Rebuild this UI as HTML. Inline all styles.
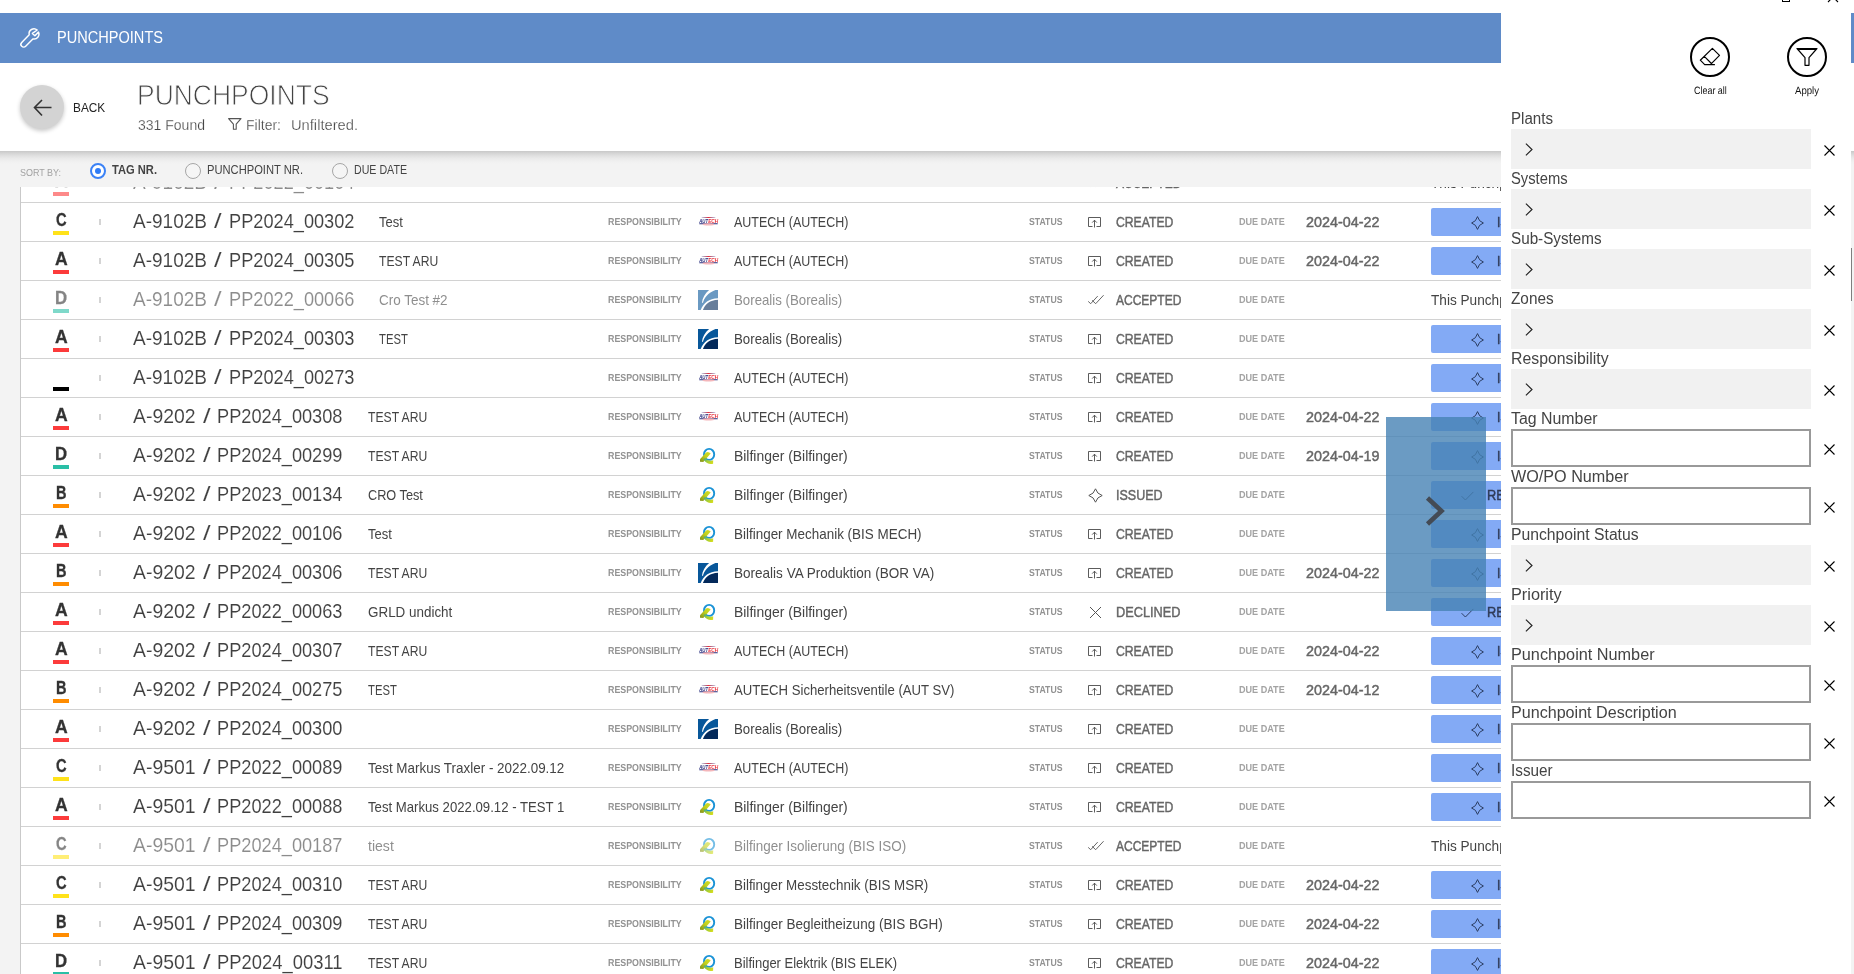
<!DOCTYPE html>
<html><head><meta charset="utf-8"><title>Punchpoints</title>
<style>
*{box-sizing:border-box;margin:0;padding:0}
html,body{width:1854px;height:974px;overflow:hidden;background:#fff}
body{font-family:"Liberation Sans",sans-serif;position:relative}
.t{position:absolute;white-space:nowrap;line-height:1;transform-origin:0 0;display:block}
.abs{position:absolute}
#hdr{left:0;top:13px;width:1854px;height:50px;background:#5f8bc8}
#sub{left:0;top:63px;width:1854px;height:88px;background:#fff}
#sortbg{left:0;top:151px;width:1854px;height:823px;background:#f3f3f3}
#shadow{left:0;top:151px;width:1854px;height:13px;background:linear-gradient(#c8c8c8 0,#d5d5d5 18%,#e1e1e1 38%,#eaeaea 58%,#f0f0f0 80%,#f3f3f3 100%)}
#list{left:20px;top:187px;width:1500px;height:787px;background:#fff;border-left:1px solid #c9c9c9;overflow:hidden}
.row{position:absolute;left:0;width:1500px;height:39px;border-bottom:1px solid #d2d2d2}
.bar{position:absolute;left:32px;top:28px;width:16px;height:4px}
.tick{position:absolute;left:78px;top:16px;width:2px;height:6px;background:#d4d4d4}
.btn{position:absolute;left:1410px;top:5px;width:100px;height:28px;background:#83aaf5;border-radius:2px}
#ov{left:1386px;top:417px;width:100px;height:194px;background:rgba(70,130,180,.8)}
#panel{left:1501px;top:0;width:350px;height:974px;background:#fff}
.fld{position:absolute;left:10px;width:300px;height:40px;background:#f1f1f1}
.inp{position:absolute;left:10px;width:300px;height:38px;background:#fff;border:2px solid #999}
svg{position:absolute;overflow:visible}
#root{position:absolute;left:0;top:0;width:1854px;height:974px;overflow:hidden;will-change:transform}
.f{opacity:.6}
</style></head>
<body><div id="root">
<div id="hdr" class="abs"></div>
<div id="sub" class="abs"></div>
<div id="sortbg" class="abs"></div>
<div id="shadow" class="abs"></div>
<svg style="left:20px;top:28px" width="20" height="20" viewBox="0 0 20 20"><g transform="translate(0.9,0.9) scale(0.92)"><path d="M17.7 1.2A5.3 5.3 0 0 0 9.05 6.4L0.9 14.7A2.9 2.9 0 0 0 5.2 18.9L13 10.9A5.3 5.3 0 0 0 19.1 3.5L15.2 7.5L12.5 4.9Z" fill="none" stroke="#fff" stroke-width="1.6" stroke-linejoin="round"/></g></svg>
<span class="t" style="left:57.20px;top:29.35px;font-size:16.1px;color:#fff;transform:scaleX(0.9049);">PUNCHPOINTS</span>
<div class="abs" style="left:20px;top:85px;width:44px;height:44px;border-radius:50%;background:#d3d3d3;box-shadow:0 2px 4px rgba(0,0,0,.22)"></div>
<svg style="left:20px;top:85px" width="44" height="44" viewBox="0 0 44 44"><path d="M31.5 22.5H14.5M22 15L14.5 22.5L22 30.5" fill="none" stroke="#333" stroke-width="1.6"/></svg>
<span class="t" style="left:73.20px;top:101.00px;font-size:13.2px;color:#222;transform:scaleX(0.8964);">BACK</span>
<span class="t" style="left:137.30px;top:80.70px;font-size:29px;color:#444;transform:scaleX(0.9125);-webkit-text-stroke:0.9px #fff;">PUNCHPOINTS</span>
<span class="t" style="left:138.00px;top:116.65px;font-size:15.3px;color:#444;transform:scaleX(0.9158);-webkit-text-stroke:0.25px #fff;">331 Found</span>
<svg style="left:228px;top:118px" width="14" height="13" viewBox="0 0 14 13"><path d="M0.6 0.6H13L8.2 6.2V11.2H5.4V6.2Z" fill="none" stroke="#555" stroke-width="1.1" stroke-linejoin="round"/></svg>
<span class="t" style="left:246.00px;top:116.65px;font-size:15.3px;color:#444;transform:scaleX(0.9150);-webkit-text-stroke:0.25px #fff;">Filter:</span>
<span class="t" style="left:291.00px;top:116.65px;font-size:15.3px;color:#444;transform:scaleX(0.9609);-webkit-text-stroke:0.25px #fff;">Unfiltered.</span>
<span class="t" style="left:20.20px;top:168.30px;font-size:10.2px;color:#a2a2a2;transform:scaleX(0.8793) rotate(0.03deg);">SORT BY:</span>
<div class="abs" style="left:90px;top:163px;width:16px;height:16px;border-radius:50%;border:2px solid #3b82f6;background:#fff"></div>
<div class="abs" style="left:95px;top:168px;width:6px;height:6px;border-radius:50%;background:#2f7cf6"></div>
<span class="t" style="left:112.00px;top:164.10px;font-size:12.2px;color:#444;transform:scaleX(0.9145);font-weight:bold;">TAG NR.</span>
<div class="abs" style="left:185px;top:163px;width:16px;height:16px;border-radius:50%;border:1.7px solid #a6a6a6;background:#f5f5f5"></div>
<span class="t" style="left:207.00px;top:164.10px;font-size:12.2px;color:#444;transform:scaleX(0.9166);">PUNCHPOINT NR.</span>
<div class="abs" style="left:332px;top:163px;width:16px;height:16px;border-radius:50%;border:1.7px solid #a6a6a6;background:#f5f5f5"></div>
<span class="t" style="left:354.00px;top:164.10px;font-size:12.2px;color:#444;transform:scaleX(0.8729);">DUE DATE</span>
<div id="list" class="abs">
<div class="row" style="top:-23px">
<span class="t f" style="left:33.65px;top:8.40px;font-size:18.2px;color:#333;transform:scaleX(0.9667);font-weight:bold;-webkit-text-stroke:0.3px #333;">A</span>
<div class="bar f" style="background:#fc3b3b"></div>
<div class="tick"></div>
<span class="t f" style="left:112.20px;top:7.65px;font-size:20.3px;color:#404040;transform:scaleX(0.9374);-webkit-text-stroke:0.1px #fff;">A-9102B</span>
<span class="t f" style="left:193.20px;top:7.65px;font-size:20.3px;color:#404040;transform:scaleX(1.3465);-webkit-text-stroke:0.1px #fff;">/</span>
<span class="t f" style="left:207.70px;top:7.65px;font-size:20.3px;color:#404040;transform:scaleX(0.8973);-webkit-text-stroke:0.1px #fff;">PP2022_00104</span>
<span class="t" style="left:586.80px;top:14.40px;font-size:10.2px;color:#939393;transform:scaleX(0.8689) rotate(0.03deg);font-weight:bold;">RESPONSIBILITY</span>
<svg class="f" style="left:677px;top:13px" width="21" height="10" viewBox="0 0 21 10"><defs><linearGradient id="ga" x1="0" x2="1"><stop offset="0" stop-color="#2a2f7e" stop-opacity=".2"/><stop offset=".5" stop-color="#e8303a"/><stop offset="1" stop-color="#2a2f7e" stop-opacity=".2"/></linearGradient></defs><rect x="3.5" y="1" width="14" height="1" rx=".5" fill="url(#ga)"/><text x="1.2" y="6.6" font-family="Liberation Sans, sans-serif" font-weight="bold" font-style="italic" font-size="5.6" fill="#2a2f7e" textLength="9" lengthAdjust="spacingAndGlyphs">AUT</text><text x="10.2" y="6.6" font-family="Liberation Sans, sans-serif" font-weight="bold" font-style="italic" font-size="5.6" fill="#e8303a" textLength="10" lengthAdjust="spacingAndGlyphs">ECH</text><rect x="1.2" y="7.2" width="18.6" height="1" rx=".5" fill="#2a2f7e"/><ellipse cx="10.5" cy="8.4" rx="6" ry="1.1" fill="#f4b6ba"/></svg>
<span class="t" style="left:1007.80px;top:14.40px;font-size:10.2px;color:#939393;transform:scaleX(0.8533) rotate(0.03deg);font-weight:bold;">STATUS</span>
<svg style="left:1066px;top:13px" width="17" height="11" viewBox="0 0 17 11"><path d="M1.2 7.4L3.7 9.7L10.7 2.1M5.1 6.3L8.7 9.7L16.6 1.2" fill="none" stroke="#555" stroke-width="0.9"/></svg>
<span class="t" style="left:1094.50px;top:11.80px;font-size:14.4px;color:#666;transform:scaleX(0.8345);-webkit-text-stroke:0.45px #666;">ACCEPTED</span>
<span class="t" style="left:1218.30px;top:14.40px;font-size:10.2px;color:#a3a3a3;transform:scaleX(0.8903) rotate(0.03deg);font-weight:bold;">DUE DATE</span>
<span class="t" style="left:1410.00px;top:12.30px;font-size:14.2px;color:#444;transform:scaleX(0.9600);">This Punchpoint</span>
</div>
<div class="row" style="top:16px">
<span class="t" style="left:34.70px;top:8.40px;font-size:18.2px;color:#333;transform:scaleX(0.8069);font-weight:bold;-webkit-text-stroke:0.3px #333;">C</span>
<div class="bar " style="background:#ffe21a"></div>
<div class="tick"></div>
<span class="t" style="left:112.20px;top:7.65px;font-size:20.3px;color:#404040;transform:scaleX(0.9374);-webkit-text-stroke:0.1px #fff;">A-9102B</span>
<span class="t" style="left:193.20px;top:7.65px;font-size:20.3px;color:#404040;transform:scaleX(1.3465);-webkit-text-stroke:0.1px #fff;">/</span>
<span class="t" style="left:207.70px;top:7.65px;font-size:20.3px;color:#404040;transform:scaleX(0.8973);-webkit-text-stroke:0.1px #fff;">PP2024_00302</span>
<span class="t" style="left:358.00px;top:12.30px;font-size:14.2px;color:#444;transform:scaleX(0.9143);">Test</span>
<span class="t" style="left:586.80px;top:14.40px;font-size:10.2px;color:#939393;transform:scaleX(0.8689) rotate(0.03deg);font-weight:bold;">RESPONSIBILITY</span>
<svg style="left:677px;top:13px" width="21" height="10" viewBox="0 0 21 10"><defs><linearGradient id="ga" x1="0" x2="1"><stop offset="0" stop-color="#2a2f7e" stop-opacity=".2"/><stop offset=".5" stop-color="#e8303a"/><stop offset="1" stop-color="#2a2f7e" stop-opacity=".2"/></linearGradient></defs><rect x="3.5" y="1" width="14" height="1" rx=".5" fill="url(#ga)"/><text x="1.2" y="6.6" font-family="Liberation Sans, sans-serif" font-weight="bold" font-style="italic" font-size="5.6" fill="#2a2f7e" textLength="9" lengthAdjust="spacingAndGlyphs">AUT</text><text x="10.2" y="6.6" font-family="Liberation Sans, sans-serif" font-weight="bold" font-style="italic" font-size="5.6" fill="#e8303a" textLength="10" lengthAdjust="spacingAndGlyphs">ECH</text><rect x="1.2" y="7.2" width="18.6" height="1" rx=".5" fill="#2a2f7e"/><ellipse cx="10.5" cy="8.4" rx="6" ry="1.1" fill="#f4b6ba"/></svg>
<span class="t" style="left:713.30px;top:11.85px;font-size:14.3px;color:#444;transform:scaleX(0.8721);">AUTECH (AUTECH)</span>
<span class="t" style="left:1007.80px;top:14.40px;font-size:10.2px;color:#939393;transform:scaleX(0.8533) rotate(0.03deg);font-weight:bold;">STATUS</span>
<svg style="left:1067px;top:13px" width="13" height="12" viewBox="0 0 13 12"><path d="M4.5 10.5H0.5V1.5H12.5V10.5H8.5M6.5 11.5V4.2M4.2 6.6L6.5 4.2L8.8 6.6" fill="none" stroke="#4a4a4a" stroke-width="0.9"/></svg>
<span class="t" style="left:1094.50px;top:11.80px;font-size:14.4px;color:#666;transform:scaleX(0.8478);-webkit-text-stroke:0.45px #666;">CREATED</span>
<span class="t" style="left:1218.30px;top:14.40px;font-size:10.2px;color:#a3a3a3;transform:scaleX(0.8903) rotate(0.03deg);font-weight:bold;">DUE DATE</span>
<span class="t" style="left:1285.00px;top:11.80px;font-size:14.4px;color:#666;transform:scaleX(0.9970);-webkit-text-stroke:0.45px #666;">2024-04-22</span>
<div class="btn"></div>
<svg style="left:1450px;top:13px" width="13" height="14" viewBox="0 0 13 14"><path d="M6.5 0.6Q7.8 5.6 12.4 7Q7.8 8.4 6.5 13.4Q5.2 8.4 0.6 7Q5.2 5.6 6.5 0.6Z" fill="none" stroke="#2c3e63" stroke-width="1" stroke-linejoin="round"/></svg>
<span class="t" style="left:1475.60px;top:12.00px;font-size:14.4px;color:#2f3b58;transform:scaleX(0.8336);-webkit-text-stroke:0.45px #2f3b58;">ISSUE</span>
</div>
<div class="row" style="top:55px">
<span class="t" style="left:33.65px;top:8.40px;font-size:18.2px;color:#333;transform:scaleX(0.9667);font-weight:bold;-webkit-text-stroke:0.3px #333;">A</span>
<div class="bar " style="background:#fc3b3b"></div>
<div class="tick"></div>
<span class="t" style="left:112.20px;top:7.65px;font-size:20.3px;color:#404040;transform:scaleX(0.9374);-webkit-text-stroke:0.1px #fff;">A-9102B</span>
<span class="t" style="left:193.20px;top:7.65px;font-size:20.3px;color:#404040;transform:scaleX(1.3465);-webkit-text-stroke:0.1px #fff;">/</span>
<span class="t" style="left:207.70px;top:7.65px;font-size:20.3px;color:#404040;transform:scaleX(0.8973);-webkit-text-stroke:0.1px #fff;">PP2024_00305</span>
<span class="t" style="left:358.00px;top:12.30px;font-size:14.2px;color:#444;transform:scaleX(0.8564);">TEST ARU</span>
<span class="t" style="left:586.80px;top:14.40px;font-size:10.2px;color:#939393;transform:scaleX(0.8689) rotate(0.03deg);font-weight:bold;">RESPONSIBILITY</span>
<svg style="left:677px;top:13px" width="21" height="10" viewBox="0 0 21 10"><defs><linearGradient id="ga" x1="0" x2="1"><stop offset="0" stop-color="#2a2f7e" stop-opacity=".2"/><stop offset=".5" stop-color="#e8303a"/><stop offset="1" stop-color="#2a2f7e" stop-opacity=".2"/></linearGradient></defs><rect x="3.5" y="1" width="14" height="1" rx=".5" fill="url(#ga)"/><text x="1.2" y="6.6" font-family="Liberation Sans, sans-serif" font-weight="bold" font-style="italic" font-size="5.6" fill="#2a2f7e" textLength="9" lengthAdjust="spacingAndGlyphs">AUT</text><text x="10.2" y="6.6" font-family="Liberation Sans, sans-serif" font-weight="bold" font-style="italic" font-size="5.6" fill="#e8303a" textLength="10" lengthAdjust="spacingAndGlyphs">ECH</text><rect x="1.2" y="7.2" width="18.6" height="1" rx=".5" fill="#2a2f7e"/><ellipse cx="10.5" cy="8.4" rx="6" ry="1.1" fill="#f4b6ba"/></svg>
<span class="t" style="left:713.30px;top:11.85px;font-size:14.3px;color:#444;transform:scaleX(0.8721);">AUTECH (AUTECH)</span>
<span class="t" style="left:1007.80px;top:14.40px;font-size:10.2px;color:#939393;transform:scaleX(0.8533) rotate(0.03deg);font-weight:bold;">STATUS</span>
<svg style="left:1067px;top:13px" width="13" height="12" viewBox="0 0 13 12"><path d="M4.5 10.5H0.5V1.5H12.5V10.5H8.5M6.5 11.5V4.2M4.2 6.6L6.5 4.2L8.8 6.6" fill="none" stroke="#4a4a4a" stroke-width="0.9"/></svg>
<span class="t" style="left:1094.50px;top:11.80px;font-size:14.4px;color:#666;transform:scaleX(0.8478);-webkit-text-stroke:0.45px #666;">CREATED</span>
<span class="t" style="left:1218.30px;top:14.40px;font-size:10.2px;color:#a3a3a3;transform:scaleX(0.8903) rotate(0.03deg);font-weight:bold;">DUE DATE</span>
<span class="t" style="left:1285.00px;top:11.80px;font-size:14.4px;color:#666;transform:scaleX(0.9970);-webkit-text-stroke:0.45px #666;">2024-04-22</span>
<div class="btn"></div>
<svg style="left:1450px;top:13px" width="13" height="14" viewBox="0 0 13 14"><path d="M6.5 0.6Q7.8 5.6 12.4 7Q7.8 8.4 6.5 13.4Q5.2 8.4 0.6 7Q5.2 5.6 6.5 0.6Z" fill="none" stroke="#2c3e63" stroke-width="1" stroke-linejoin="round"/></svg>
<span class="t" style="left:1475.60px;top:12.00px;font-size:14.4px;color:#2f3b58;transform:scaleX(0.8336);-webkit-text-stroke:0.45px #2f3b58;">ISSUE</span>
</div>
<div class="row" style="top:94px">
<span class="t f" style="left:33.95px;top:8.40px;font-size:18.2px;color:#333;transform:scaleX(0.9210);font-weight:bold;-webkit-text-stroke:0.3px #333;">D</span>
<div class="bar f" style="background:#2abfa6"></div>
<div class="tick"></div>
<span class="t f" style="left:112.20px;top:7.65px;font-size:20.3px;color:#404040;transform:scaleX(0.9374);-webkit-text-stroke:0.1px #fff;">A-9102B</span>
<span class="t f" style="left:193.20px;top:7.65px;font-size:20.3px;color:#404040;transform:scaleX(1.3465);-webkit-text-stroke:0.1px #fff;">/</span>
<span class="t f" style="left:207.70px;top:7.65px;font-size:20.3px;color:#404040;transform:scaleX(0.8973);-webkit-text-stroke:0.1px #fff;">PP2022_00066</span>
<span class="t f" style="left:358.00px;top:12.30px;font-size:14.2px;color:#444;transform:scaleX(0.9489);">Cro Test #2</span>
<span class="t" style="left:586.80px;top:14.40px;font-size:10.2px;color:#939393;transform:scaleX(0.8689) rotate(0.03deg);font-weight:bold;">RESPONSIBILITY</span>
<svg class="f" style="left:677px;top:9px" width="20" height="20" viewBox="0 0 20 20"><rect width="20" height="20" fill="#08579a"/><path d="M20 9.6C12 9.9 7 14 5 20H20Z" fill="#03295a"/><path d="M20 8.3C11 8.6 5.5 13 2.7 20H4.9C7 14 12 10 20 9.7Z" fill="#fff"/><path d="M11.1 0C7 3.5 4.3 8 4 12.5L4.9 13.1C6 8 10 3 17.4 0Z" fill="#fff"/></svg>
<span class="t f" style="left:713.30px;top:11.85px;font-size:14.3px;color:#444;transform:scaleX(0.9271);">Borealis (Borealis)</span>
<span class="t" style="left:1007.80px;top:14.40px;font-size:10.2px;color:#939393;transform:scaleX(0.8533) rotate(0.03deg);font-weight:bold;">STATUS</span>
<svg style="left:1066px;top:13px" width="17" height="11" viewBox="0 0 17 11"><path d="M1.2 7.4L3.7 9.7L10.7 2.1M5.1 6.3L8.7 9.7L16.6 1.2" fill="none" stroke="#555" stroke-width="0.9"/></svg>
<span class="t" style="left:1094.50px;top:11.80px;font-size:14.4px;color:#666;transform:scaleX(0.8345);-webkit-text-stroke:0.45px #666;">ACCEPTED</span>
<span class="t" style="left:1218.30px;top:14.40px;font-size:10.2px;color:#a3a3a3;transform:scaleX(0.8903) rotate(0.03deg);font-weight:bold;">DUE DATE</span>
<span class="t" style="left:1410.00px;top:12.30px;font-size:14.2px;color:#444;transform:scaleX(0.9600);">This Punchpoint</span>
</div>
<div class="row" style="top:133px">
<span class="t" style="left:33.65px;top:8.40px;font-size:18.2px;color:#333;transform:scaleX(0.9667);font-weight:bold;-webkit-text-stroke:0.3px #333;">A</span>
<div class="bar " style="background:#fc3b3b"></div>
<div class="tick"></div>
<span class="t" style="left:112.20px;top:7.65px;font-size:20.3px;color:#404040;transform:scaleX(0.9374);-webkit-text-stroke:0.1px #fff;">A-9102B</span>
<span class="t" style="left:193.20px;top:7.65px;font-size:20.3px;color:#404040;transform:scaleX(1.3465);-webkit-text-stroke:0.1px #fff;">/</span>
<span class="t" style="left:207.70px;top:7.65px;font-size:20.3px;color:#404040;transform:scaleX(0.8973);-webkit-text-stroke:0.1px #fff;">PP2024_00303</span>
<span class="t" style="left:358.00px;top:12.30px;font-size:14.2px;color:#444;transform:scaleX(0.7940);">TEST</span>
<span class="t" style="left:586.80px;top:14.40px;font-size:10.2px;color:#939393;transform:scaleX(0.8689) rotate(0.03deg);font-weight:bold;">RESPONSIBILITY</span>
<svg style="left:677px;top:9px" width="20" height="20" viewBox="0 0 20 20"><rect width="20" height="20" fill="#08579a"/><path d="M20 9.6C12 9.9 7 14 5 20H20Z" fill="#03295a"/><path d="M20 8.3C11 8.6 5.5 13 2.7 20H4.9C7 14 12 10 20 9.7Z" fill="#fff"/><path d="M11.1 0C7 3.5 4.3 8 4 12.5L4.9 13.1C6 8 10 3 17.4 0Z" fill="#fff"/></svg>
<span class="t" style="left:713.30px;top:11.85px;font-size:14.3px;color:#444;transform:scaleX(0.9271);">Borealis (Borealis)</span>
<span class="t" style="left:1007.80px;top:14.40px;font-size:10.2px;color:#939393;transform:scaleX(0.8533) rotate(0.03deg);font-weight:bold;">STATUS</span>
<svg style="left:1067px;top:13px" width="13" height="12" viewBox="0 0 13 12"><path d="M4.5 10.5H0.5V1.5H12.5V10.5H8.5M6.5 11.5V4.2M4.2 6.6L6.5 4.2L8.8 6.6" fill="none" stroke="#4a4a4a" stroke-width="0.9"/></svg>
<span class="t" style="left:1094.50px;top:11.80px;font-size:14.4px;color:#666;transform:scaleX(0.8478);-webkit-text-stroke:0.45px #666;">CREATED</span>
<span class="t" style="left:1218.30px;top:14.40px;font-size:10.2px;color:#a3a3a3;transform:scaleX(0.8903) rotate(0.03deg);font-weight:bold;">DUE DATE</span>
<div class="btn"></div>
<svg style="left:1450px;top:13px" width="13" height="14" viewBox="0 0 13 14"><path d="M6.5 0.6Q7.8 5.6 12.4 7Q7.8 8.4 6.5 13.4Q5.2 8.4 0.6 7Q5.2 5.6 6.5 0.6Z" fill="none" stroke="#2c3e63" stroke-width="1" stroke-linejoin="round"/></svg>
<span class="t" style="left:1475.60px;top:12.00px;font-size:14.4px;color:#2f3b58;transform:scaleX(0.8336);-webkit-text-stroke:0.45px #2f3b58;">ISSUE</span>
</div>
<div class="row" style="top:172px">
<div class="bar " style="background:#000"></div>
<div class="tick"></div>
<span class="t" style="left:112.20px;top:7.65px;font-size:20.3px;color:#404040;transform:scaleX(0.9374);-webkit-text-stroke:0.1px #fff;">A-9102B</span>
<span class="t" style="left:193.20px;top:7.65px;font-size:20.3px;color:#404040;transform:scaleX(1.3465);-webkit-text-stroke:0.1px #fff;">/</span>
<span class="t" style="left:207.70px;top:7.65px;font-size:20.3px;color:#404040;transform:scaleX(0.8973);-webkit-text-stroke:0.1px #fff;">PP2024_00273</span>
<span class="t" style="left:586.80px;top:14.40px;font-size:10.2px;color:#939393;transform:scaleX(0.8689) rotate(0.03deg);font-weight:bold;">RESPONSIBILITY</span>
<svg style="left:677px;top:13px" width="21" height="10" viewBox="0 0 21 10"><defs><linearGradient id="ga" x1="0" x2="1"><stop offset="0" stop-color="#2a2f7e" stop-opacity=".2"/><stop offset=".5" stop-color="#e8303a"/><stop offset="1" stop-color="#2a2f7e" stop-opacity=".2"/></linearGradient></defs><rect x="3.5" y="1" width="14" height="1" rx=".5" fill="url(#ga)"/><text x="1.2" y="6.6" font-family="Liberation Sans, sans-serif" font-weight="bold" font-style="italic" font-size="5.6" fill="#2a2f7e" textLength="9" lengthAdjust="spacingAndGlyphs">AUT</text><text x="10.2" y="6.6" font-family="Liberation Sans, sans-serif" font-weight="bold" font-style="italic" font-size="5.6" fill="#e8303a" textLength="10" lengthAdjust="spacingAndGlyphs">ECH</text><rect x="1.2" y="7.2" width="18.6" height="1" rx=".5" fill="#2a2f7e"/><ellipse cx="10.5" cy="8.4" rx="6" ry="1.1" fill="#f4b6ba"/></svg>
<span class="t" style="left:713.30px;top:11.85px;font-size:14.3px;color:#444;transform:scaleX(0.8721);">AUTECH (AUTECH)</span>
<span class="t" style="left:1007.80px;top:14.40px;font-size:10.2px;color:#939393;transform:scaleX(0.8533) rotate(0.03deg);font-weight:bold;">STATUS</span>
<svg style="left:1067px;top:13px" width="13" height="12" viewBox="0 0 13 12"><path d="M4.5 10.5H0.5V1.5H12.5V10.5H8.5M6.5 11.5V4.2M4.2 6.6L6.5 4.2L8.8 6.6" fill="none" stroke="#4a4a4a" stroke-width="0.9"/></svg>
<span class="t" style="left:1094.50px;top:11.80px;font-size:14.4px;color:#666;transform:scaleX(0.8478);-webkit-text-stroke:0.45px #666;">CREATED</span>
<span class="t" style="left:1218.30px;top:14.40px;font-size:10.2px;color:#a3a3a3;transform:scaleX(0.8903) rotate(0.03deg);font-weight:bold;">DUE DATE</span>
<div class="btn"></div>
<svg style="left:1450px;top:13px" width="13" height="14" viewBox="0 0 13 14"><path d="M6.5 0.6Q7.8 5.6 12.4 7Q7.8 8.4 6.5 13.4Q5.2 8.4 0.6 7Q5.2 5.6 6.5 0.6Z" fill="none" stroke="#2c3e63" stroke-width="1" stroke-linejoin="round"/></svg>
<span class="t" style="left:1475.60px;top:12.00px;font-size:14.4px;color:#2f3b58;transform:scaleX(0.8336);-webkit-text-stroke:0.45px #2f3b58;">ISSUE</span>
</div>
<div class="row" style="top:211px">
<span class="t" style="left:33.65px;top:8.40px;font-size:18.2px;color:#333;transform:scaleX(0.9667);font-weight:bold;-webkit-text-stroke:0.3px #333;">A</span>
<div class="bar " style="background:#fc3b3b"></div>
<div class="tick"></div>
<span class="t" style="left:112.20px;top:7.65px;font-size:20.3px;color:#404040;transform:scaleX(0.9570);-webkit-text-stroke:0.1px #fff;">A-9202</span>
<span class="t" style="left:181.80px;top:7.65px;font-size:20.3px;color:#404040;transform:scaleX(1.3465);-webkit-text-stroke:0.1px #fff;">/</span>
<span class="t" style="left:196.30px;top:7.65px;font-size:20.3px;color:#404040;transform:scaleX(0.8973);-webkit-text-stroke:0.1px #fff;">PP2024_00308</span>
<span class="t" style="left:347.20px;top:12.30px;font-size:14.2px;color:#444;transform:scaleX(0.8564);">TEST ARU</span>
<span class="t" style="left:586.80px;top:14.40px;font-size:10.2px;color:#939393;transform:scaleX(0.8689) rotate(0.03deg);font-weight:bold;">RESPONSIBILITY</span>
<svg style="left:677px;top:13px" width="21" height="10" viewBox="0 0 21 10"><defs><linearGradient id="ga" x1="0" x2="1"><stop offset="0" stop-color="#2a2f7e" stop-opacity=".2"/><stop offset=".5" stop-color="#e8303a"/><stop offset="1" stop-color="#2a2f7e" stop-opacity=".2"/></linearGradient></defs><rect x="3.5" y="1" width="14" height="1" rx=".5" fill="url(#ga)"/><text x="1.2" y="6.6" font-family="Liberation Sans, sans-serif" font-weight="bold" font-style="italic" font-size="5.6" fill="#2a2f7e" textLength="9" lengthAdjust="spacingAndGlyphs">AUT</text><text x="10.2" y="6.6" font-family="Liberation Sans, sans-serif" font-weight="bold" font-style="italic" font-size="5.6" fill="#e8303a" textLength="10" lengthAdjust="spacingAndGlyphs">ECH</text><rect x="1.2" y="7.2" width="18.6" height="1" rx=".5" fill="#2a2f7e"/><ellipse cx="10.5" cy="8.4" rx="6" ry="1.1" fill="#f4b6ba"/></svg>
<span class="t" style="left:713.30px;top:11.85px;font-size:14.3px;color:#444;transform:scaleX(0.8721);">AUTECH (AUTECH)</span>
<span class="t" style="left:1007.80px;top:14.40px;font-size:10.2px;color:#939393;transform:scaleX(0.8533) rotate(0.03deg);font-weight:bold;">STATUS</span>
<svg style="left:1067px;top:13px" width="13" height="12" viewBox="0 0 13 12"><path d="M4.5 10.5H0.5V1.5H12.5V10.5H8.5M6.5 11.5V4.2M4.2 6.6L6.5 4.2L8.8 6.6" fill="none" stroke="#4a4a4a" stroke-width="0.9"/></svg>
<span class="t" style="left:1094.50px;top:11.80px;font-size:14.4px;color:#666;transform:scaleX(0.8478);-webkit-text-stroke:0.45px #666;">CREATED</span>
<span class="t" style="left:1218.30px;top:14.40px;font-size:10.2px;color:#a3a3a3;transform:scaleX(0.8903) rotate(0.03deg);font-weight:bold;">DUE DATE</span>
<span class="t" style="left:1285.00px;top:11.80px;font-size:14.4px;color:#666;transform:scaleX(0.9970);-webkit-text-stroke:0.45px #666;">2024-04-22</span>
<div class="btn"></div>
<svg style="left:1450px;top:13px" width="13" height="14" viewBox="0 0 13 14"><path d="M6.5 0.6Q7.8 5.6 12.4 7Q7.8 8.4 6.5 13.4Q5.2 8.4 0.6 7Q5.2 5.6 6.5 0.6Z" fill="none" stroke="#2c3e63" stroke-width="1" stroke-linejoin="round"/></svg>
<span class="t" style="left:1475.60px;top:12.00px;font-size:14.4px;color:#2f3b58;transform:scaleX(0.8336);-webkit-text-stroke:0.45px #2f3b58;">ISSUE</span>
</div>
<div class="row" style="top:250px">
<span class="t" style="left:33.95px;top:8.40px;font-size:18.2px;color:#333;transform:scaleX(0.9210);font-weight:bold;-webkit-text-stroke:0.3px #333;">D</span>
<div class="bar " style="background:#2abfa6"></div>
<div class="tick"></div>
<span class="t" style="left:112.20px;top:7.65px;font-size:20.3px;color:#404040;transform:scaleX(0.9570);-webkit-text-stroke:0.1px #fff;">A-9202</span>
<span class="t" style="left:181.80px;top:7.65px;font-size:20.3px;color:#404040;transform:scaleX(1.3465);-webkit-text-stroke:0.1px #fff;">/</span>
<span class="t" style="left:196.30px;top:7.65px;font-size:20.3px;color:#404040;transform:scaleX(0.8973);-webkit-text-stroke:0.1px #fff;">PP2024_00299</span>
<span class="t" style="left:347.20px;top:12.30px;font-size:14.2px;color:#444;transform:scaleX(0.8564);">TEST ARU</span>
<span class="t" style="left:586.80px;top:14.40px;font-size:10.2px;color:#939393;transform:scaleX(0.8689) rotate(0.03deg);font-weight:bold;">RESPONSIBILITY</span>
<svg style="left:679px;top:11px" width="16" height="17" viewBox="0 0 16 17"><defs><linearGradient id="g1" x1="0" y1="1" x2="1" y2="0"><stop offset="0" stop-color="#7f8f1a"/><stop offset=".55" stop-color="#c3d21c"/><stop offset="1" stop-color="#d2dc28"/></linearGradient><linearGradient id="g2" x1="0" y1="0" x2="1" y2="0.6"><stop offset="0" stop-color="#1f9fa8"/><stop offset=".45" stop-color="#9ccb3a"/><stop offset="1" stop-color="#d0db1e"/></linearGradient></defs><ellipse cx="9.1" cy="6.4" rx="5.1" ry="5.5" fill="none" stroke="#1b93d6" stroke-width="1.9"/><path d="M0 11.3L6.1 4.4Q8.6 3.1 10.7 5.6L3.3 13.9L0 13.7Z" fill="url(#g1)"/><path d="M5 10Q8 14 13.2 12.2L13.1 15.7Q8 17.4 3.7 11.8Z" fill="url(#g2)"/></svg>
<span class="t" style="left:713.30px;top:11.85px;font-size:14.3px;color:#444;transform:scaleX(0.9733);">Bilfinger (Bilfinger)</span>
<span class="t" style="left:1007.80px;top:14.40px;font-size:10.2px;color:#939393;transform:scaleX(0.8533) rotate(0.03deg);font-weight:bold;">STATUS</span>
<svg style="left:1067px;top:13px" width="13" height="12" viewBox="0 0 13 12"><path d="M4.5 10.5H0.5V1.5H12.5V10.5H8.5M6.5 11.5V4.2M4.2 6.6L6.5 4.2L8.8 6.6" fill="none" stroke="#4a4a4a" stroke-width="0.9"/></svg>
<span class="t" style="left:1094.50px;top:11.80px;font-size:14.4px;color:#666;transform:scaleX(0.8478);-webkit-text-stroke:0.45px #666;">CREATED</span>
<span class="t" style="left:1218.30px;top:14.40px;font-size:10.2px;color:#a3a3a3;transform:scaleX(0.8903) rotate(0.03deg);font-weight:bold;">DUE DATE</span>
<span class="t" style="left:1285.00px;top:11.80px;font-size:14.4px;color:#666;transform:scaleX(0.9970);-webkit-text-stroke:0.45px #666;">2024-04-19</span>
<div class="btn"></div>
<svg style="left:1450px;top:13px" width="13" height="14" viewBox="0 0 13 14"><path d="M6.5 0.6Q7.8 5.6 12.4 7Q7.8 8.4 6.5 13.4Q5.2 8.4 0.6 7Q5.2 5.6 6.5 0.6Z" fill="none" stroke="#2c3e63" stroke-width="1" stroke-linejoin="round"/></svg>
<span class="t" style="left:1475.60px;top:12.00px;font-size:14.4px;color:#2f3b58;transform:scaleX(0.8336);-webkit-text-stroke:0.45px #2f3b58;">ISSUE</span>
</div>
<div class="row" style="top:289px">
<span class="t" style="left:34.75px;top:8.40px;font-size:18.2px;color:#333;transform:scaleX(0.7992);font-weight:bold;-webkit-text-stroke:0.3px #333;">B</span>
<div class="bar " style="background:#ff8c00"></div>
<div class="tick"></div>
<span class="t" style="left:112.20px;top:7.65px;font-size:20.3px;color:#404040;transform:scaleX(0.9570);-webkit-text-stroke:0.1px #fff;">A-9202</span>
<span class="t" style="left:181.80px;top:7.65px;font-size:20.3px;color:#404040;transform:scaleX(1.3465);-webkit-text-stroke:0.1px #fff;">/</span>
<span class="t" style="left:196.30px;top:7.65px;font-size:20.3px;color:#404040;transform:scaleX(0.8973);-webkit-text-stroke:0.1px #fff;">PP2023_00134</span>
<span class="t" style="left:347.20px;top:12.30px;font-size:14.2px;color:#444;transform:scaleX(0.8965);">CRO Test</span>
<span class="t" style="left:586.80px;top:14.40px;font-size:10.2px;color:#939393;transform:scaleX(0.8689) rotate(0.03deg);font-weight:bold;">RESPONSIBILITY</span>
<svg style="left:679px;top:11px" width="16" height="17" viewBox="0 0 16 17"><defs><linearGradient id="g1" x1="0" y1="1" x2="1" y2="0"><stop offset="0" stop-color="#7f8f1a"/><stop offset=".55" stop-color="#c3d21c"/><stop offset="1" stop-color="#d2dc28"/></linearGradient><linearGradient id="g2" x1="0" y1="0" x2="1" y2="0.6"><stop offset="0" stop-color="#1f9fa8"/><stop offset=".45" stop-color="#9ccb3a"/><stop offset="1" stop-color="#d0db1e"/></linearGradient></defs><ellipse cx="9.1" cy="6.4" rx="5.1" ry="5.5" fill="none" stroke="#1b93d6" stroke-width="1.9"/><path d="M0 11.3L6.1 4.4Q8.6 3.1 10.7 5.6L3.3 13.9L0 13.7Z" fill="url(#g1)"/><path d="M5 10Q8 14 13.2 12.2L13.1 15.7Q8 17.4 3.7 11.8Z" fill="url(#g2)"/></svg>
<span class="t" style="left:713.30px;top:11.85px;font-size:14.3px;color:#444;transform:scaleX(0.9733);">Bilfinger (Bilfinger)</span>
<span class="t" style="left:1007.80px;top:14.40px;font-size:10.2px;color:#939393;transform:scaleX(0.8533) rotate(0.03deg);font-weight:bold;">STATUS</span>
<svg style="left:1067px;top:12px" width="15" height="15" viewBox="0 0 15 15"><path d="M7.5 0.8Q9 6 14.2 7.5Q9 9 7.5 14.2Q6 9 0.8 7.5Q6 6 7.5 0.8Z" fill="none" stroke="#555" stroke-width="1" stroke-linejoin="round"/></svg>
<span class="t" style="left:1094.50px;top:11.80px;font-size:14.4px;color:#666;transform:scaleX(0.8677);-webkit-text-stroke:0.45px #666;">ISSUED</span>
<span class="t" style="left:1218.30px;top:14.40px;font-size:10.2px;color:#a3a3a3;transform:scaleX(0.8903) rotate(0.03deg);font-weight:bold;">DUE DATE</span>
<div class="btn"></div>
<svg style="left:1440px;top:15px" width="13" height="10" viewBox="0 0 13 10"><path d="M0.6 5.2L4.4 9L12.4 0.9" fill="none" stroke="#2c3e63" stroke-width="1"/></svg>
<span class="t" style="left:1466.30px;top:12.00px;font-size:14.4px;color:#2f3b58;transform:scaleX(0.8885);-webkit-text-stroke:0.45px #2f3b58;">REOPEN</span>
</div>
<div class="row" style="top:328px">
<span class="t" style="left:33.65px;top:8.40px;font-size:18.2px;color:#333;transform:scaleX(0.9667);font-weight:bold;-webkit-text-stroke:0.3px #333;">A</span>
<div class="bar " style="background:#fc3b3b"></div>
<div class="tick"></div>
<span class="t" style="left:112.20px;top:7.65px;font-size:20.3px;color:#404040;transform:scaleX(0.9570);-webkit-text-stroke:0.1px #fff;">A-9202</span>
<span class="t" style="left:181.80px;top:7.65px;font-size:20.3px;color:#404040;transform:scaleX(1.3465);-webkit-text-stroke:0.1px #fff;">/</span>
<span class="t" style="left:196.30px;top:7.65px;font-size:20.3px;color:#404040;transform:scaleX(0.8973);-webkit-text-stroke:0.1px #fff;">PP2022_00106</span>
<span class="t" style="left:347.20px;top:12.30px;font-size:14.2px;color:#444;transform:scaleX(0.9143);">Test</span>
<span class="t" style="left:586.80px;top:14.40px;font-size:10.2px;color:#939393;transform:scaleX(0.8689) rotate(0.03deg);font-weight:bold;">RESPONSIBILITY</span>
<svg style="left:679px;top:11px" width="16" height="17" viewBox="0 0 16 17"><defs><linearGradient id="g1" x1="0" y1="1" x2="1" y2="0"><stop offset="0" stop-color="#7f8f1a"/><stop offset=".55" stop-color="#c3d21c"/><stop offset="1" stop-color="#d2dc28"/></linearGradient><linearGradient id="g2" x1="0" y1="0" x2="1" y2="0.6"><stop offset="0" stop-color="#1f9fa8"/><stop offset=".45" stop-color="#9ccb3a"/><stop offset="1" stop-color="#d0db1e"/></linearGradient></defs><ellipse cx="9.1" cy="6.4" rx="5.1" ry="5.5" fill="none" stroke="#1b93d6" stroke-width="1.9"/><path d="M0 11.3L6.1 4.4Q8.6 3.1 10.7 5.6L3.3 13.9L0 13.7Z" fill="url(#g1)"/><path d="M5 10Q8 14 13.2 12.2L13.1 15.7Q8 17.4 3.7 11.8Z" fill="url(#g2)"/></svg>
<span class="t" style="left:713.30px;top:11.85px;font-size:14.3px;color:#444;transform:scaleX(0.9407);">Bilfinger Mechanik (BIS MECH)</span>
<span class="t" style="left:1007.80px;top:14.40px;font-size:10.2px;color:#939393;transform:scaleX(0.8533) rotate(0.03deg);font-weight:bold;">STATUS</span>
<svg style="left:1067px;top:13px" width="13" height="12" viewBox="0 0 13 12"><path d="M4.5 10.5H0.5V1.5H12.5V10.5H8.5M6.5 11.5V4.2M4.2 6.6L6.5 4.2L8.8 6.6" fill="none" stroke="#4a4a4a" stroke-width="0.9"/></svg>
<span class="t" style="left:1094.50px;top:11.80px;font-size:14.4px;color:#666;transform:scaleX(0.8478);-webkit-text-stroke:0.45px #666;">CREATED</span>
<span class="t" style="left:1218.30px;top:14.40px;font-size:10.2px;color:#a3a3a3;transform:scaleX(0.8903) rotate(0.03deg);font-weight:bold;">DUE DATE</span>
<div class="btn"></div>
<svg style="left:1450px;top:13px" width="13" height="14" viewBox="0 0 13 14"><path d="M6.5 0.6Q7.8 5.6 12.4 7Q7.8 8.4 6.5 13.4Q5.2 8.4 0.6 7Q5.2 5.6 6.5 0.6Z" fill="none" stroke="#2c3e63" stroke-width="1" stroke-linejoin="round"/></svg>
<span class="t" style="left:1475.60px;top:12.00px;font-size:14.4px;color:#2f3b58;transform:scaleX(0.8336);-webkit-text-stroke:0.45px #2f3b58;">ISSUE</span>
</div>
<div class="row" style="top:367px">
<span class="t" style="left:34.75px;top:8.40px;font-size:18.2px;color:#333;transform:scaleX(0.7992);font-weight:bold;-webkit-text-stroke:0.3px #333;">B</span>
<div class="bar " style="background:#ff8c00"></div>
<div class="tick"></div>
<span class="t" style="left:112.20px;top:7.65px;font-size:20.3px;color:#404040;transform:scaleX(0.9570);-webkit-text-stroke:0.1px #fff;">A-9202</span>
<span class="t" style="left:181.80px;top:7.65px;font-size:20.3px;color:#404040;transform:scaleX(1.3465);-webkit-text-stroke:0.1px #fff;">/</span>
<span class="t" style="left:196.30px;top:7.65px;font-size:20.3px;color:#404040;transform:scaleX(0.8973);-webkit-text-stroke:0.1px #fff;">PP2024_00306</span>
<span class="t" style="left:347.20px;top:12.30px;font-size:14.2px;color:#444;transform:scaleX(0.8564);">TEST ARU</span>
<span class="t" style="left:586.80px;top:14.40px;font-size:10.2px;color:#939393;transform:scaleX(0.8689) rotate(0.03deg);font-weight:bold;">RESPONSIBILITY</span>
<svg style="left:677px;top:9px" width="20" height="20" viewBox="0 0 20 20"><rect width="20" height="20" fill="#08579a"/><path d="M20 9.6C12 9.9 7 14 5 20H20Z" fill="#03295a"/><path d="M20 8.3C11 8.6 5.5 13 2.7 20H4.9C7 14 12 10 20 9.7Z" fill="#fff"/><path d="M11.1 0C7 3.5 4.3 8 4 12.5L4.9 13.1C6 8 10 3 17.4 0Z" fill="#fff"/></svg>
<span class="t" style="left:713.30px;top:11.85px;font-size:14.3px;color:#444;transform:scaleX(0.9464);">Borealis VA Produktion (BOR VA)</span>
<span class="t" style="left:1007.80px;top:14.40px;font-size:10.2px;color:#939393;transform:scaleX(0.8533) rotate(0.03deg);font-weight:bold;">STATUS</span>
<svg style="left:1067px;top:13px" width="13" height="12" viewBox="0 0 13 12"><path d="M4.5 10.5H0.5V1.5H12.5V10.5H8.5M6.5 11.5V4.2M4.2 6.6L6.5 4.2L8.8 6.6" fill="none" stroke="#4a4a4a" stroke-width="0.9"/></svg>
<span class="t" style="left:1094.50px;top:11.80px;font-size:14.4px;color:#666;transform:scaleX(0.8478);-webkit-text-stroke:0.45px #666;">CREATED</span>
<span class="t" style="left:1218.30px;top:14.40px;font-size:10.2px;color:#a3a3a3;transform:scaleX(0.8903) rotate(0.03deg);font-weight:bold;">DUE DATE</span>
<span class="t" style="left:1285.00px;top:11.80px;font-size:14.4px;color:#666;transform:scaleX(0.9970);-webkit-text-stroke:0.45px #666;">2024-04-22</span>
<div class="btn"></div>
<svg style="left:1450px;top:13px" width="13" height="14" viewBox="0 0 13 14"><path d="M6.5 0.6Q7.8 5.6 12.4 7Q7.8 8.4 6.5 13.4Q5.2 8.4 0.6 7Q5.2 5.6 6.5 0.6Z" fill="none" stroke="#2c3e63" stroke-width="1" stroke-linejoin="round"/></svg>
<span class="t" style="left:1475.60px;top:12.00px;font-size:14.4px;color:#2f3b58;transform:scaleX(0.8336);-webkit-text-stroke:0.45px #2f3b58;">ISSUE</span>
</div>
<div class="row" style="top:406px">
<span class="t" style="left:33.65px;top:8.40px;font-size:18.2px;color:#333;transform:scaleX(0.9667);font-weight:bold;-webkit-text-stroke:0.3px #333;">A</span>
<div class="bar " style="background:#fc3b3b"></div>
<div class="tick"></div>
<span class="t" style="left:112.20px;top:7.65px;font-size:20.3px;color:#404040;transform:scaleX(0.9570);-webkit-text-stroke:0.1px #fff;">A-9202</span>
<span class="t" style="left:181.80px;top:7.65px;font-size:20.3px;color:#404040;transform:scaleX(1.3465);-webkit-text-stroke:0.1px #fff;">/</span>
<span class="t" style="left:196.30px;top:7.65px;font-size:20.3px;color:#404040;transform:scaleX(0.8973);-webkit-text-stroke:0.1px #fff;">PP2022_00063</span>
<span class="t" style="left:347.20px;top:12.30px;font-size:14.2px;color:#444;transform:scaleX(0.9460);">GRLD undicht</span>
<span class="t" style="left:586.80px;top:14.40px;font-size:10.2px;color:#939393;transform:scaleX(0.8689) rotate(0.03deg);font-weight:bold;">RESPONSIBILITY</span>
<svg style="left:679px;top:11px" width="16" height="17" viewBox="0 0 16 17"><defs><linearGradient id="g1" x1="0" y1="1" x2="1" y2="0"><stop offset="0" stop-color="#7f8f1a"/><stop offset=".55" stop-color="#c3d21c"/><stop offset="1" stop-color="#d2dc28"/></linearGradient><linearGradient id="g2" x1="0" y1="0" x2="1" y2="0.6"><stop offset="0" stop-color="#1f9fa8"/><stop offset=".45" stop-color="#9ccb3a"/><stop offset="1" stop-color="#d0db1e"/></linearGradient></defs><ellipse cx="9.1" cy="6.4" rx="5.1" ry="5.5" fill="none" stroke="#1b93d6" stroke-width="1.9"/><path d="M0 11.3L6.1 4.4Q8.6 3.1 10.7 5.6L3.3 13.9L0 13.7Z" fill="url(#g1)"/><path d="M5 10Q8 14 13.2 12.2L13.1 15.7Q8 17.4 3.7 11.8Z" fill="url(#g2)"/></svg>
<span class="t" style="left:713.30px;top:11.85px;font-size:14.3px;color:#444;transform:scaleX(0.9733);">Bilfinger (Bilfinger)</span>
<span class="t" style="left:1007.80px;top:14.40px;font-size:10.2px;color:#939393;transform:scaleX(0.8533) rotate(0.03deg);font-weight:bold;">STATUS</span>
<svg style="left:1068px;top:13px" width="13" height="13" viewBox="0 0 13 13"><path d="M1 1L12 12M12 1L1 12" fill="none" stroke="#555" stroke-width="1"/></svg>
<span class="t" style="left:1094.50px;top:11.80px;font-size:14.4px;color:#666;transform:scaleX(0.8862);-webkit-text-stroke:0.45px #666;">DECLINED</span>
<span class="t" style="left:1218.30px;top:14.40px;font-size:10.2px;color:#a3a3a3;transform:scaleX(0.8903) rotate(0.03deg);font-weight:bold;">DUE DATE</span>
<div class="btn"></div>
<svg style="left:1440px;top:15px" width="13" height="10" viewBox="0 0 13 10"><path d="M0.6 5.2L4.4 9L12.4 0.9" fill="none" stroke="#2c3e63" stroke-width="1"/></svg>
<span class="t" style="left:1466.30px;top:12.00px;font-size:14.4px;color:#2f3b58;transform:scaleX(0.8885);-webkit-text-stroke:0.45px #2f3b58;">REOPEN</span>
</div>
<div class="row" style="top:445px">
<span class="t" style="left:33.65px;top:8.40px;font-size:18.2px;color:#333;transform:scaleX(0.9667);font-weight:bold;-webkit-text-stroke:0.3px #333;">A</span>
<div class="bar " style="background:#fc3b3b"></div>
<div class="tick"></div>
<span class="t" style="left:112.20px;top:7.65px;font-size:20.3px;color:#404040;transform:scaleX(0.9570);-webkit-text-stroke:0.1px #fff;">A-9202</span>
<span class="t" style="left:181.80px;top:7.65px;font-size:20.3px;color:#404040;transform:scaleX(1.3465);-webkit-text-stroke:0.1px #fff;">/</span>
<span class="t" style="left:196.30px;top:7.65px;font-size:20.3px;color:#404040;transform:scaleX(0.8973);-webkit-text-stroke:0.1px #fff;">PP2024_00307</span>
<span class="t" style="left:347.20px;top:12.30px;font-size:14.2px;color:#444;transform:scaleX(0.8564);">TEST ARU</span>
<span class="t" style="left:586.80px;top:14.40px;font-size:10.2px;color:#939393;transform:scaleX(0.8689) rotate(0.03deg);font-weight:bold;">RESPONSIBILITY</span>
<svg style="left:677px;top:13px" width="21" height="10" viewBox="0 0 21 10"><defs><linearGradient id="ga" x1="0" x2="1"><stop offset="0" stop-color="#2a2f7e" stop-opacity=".2"/><stop offset=".5" stop-color="#e8303a"/><stop offset="1" stop-color="#2a2f7e" stop-opacity=".2"/></linearGradient></defs><rect x="3.5" y="1" width="14" height="1" rx=".5" fill="url(#ga)"/><text x="1.2" y="6.6" font-family="Liberation Sans, sans-serif" font-weight="bold" font-style="italic" font-size="5.6" fill="#2a2f7e" textLength="9" lengthAdjust="spacingAndGlyphs">AUT</text><text x="10.2" y="6.6" font-family="Liberation Sans, sans-serif" font-weight="bold" font-style="italic" font-size="5.6" fill="#e8303a" textLength="10" lengthAdjust="spacingAndGlyphs">ECH</text><rect x="1.2" y="7.2" width="18.6" height="1" rx=".5" fill="#2a2f7e"/><ellipse cx="10.5" cy="8.4" rx="6" ry="1.1" fill="#f4b6ba"/></svg>
<span class="t" style="left:713.30px;top:11.85px;font-size:14.3px;color:#444;transform:scaleX(0.8721);">AUTECH (AUTECH)</span>
<span class="t" style="left:1007.80px;top:14.40px;font-size:10.2px;color:#939393;transform:scaleX(0.8533) rotate(0.03deg);font-weight:bold;">STATUS</span>
<svg style="left:1067px;top:13px" width="13" height="12" viewBox="0 0 13 12"><path d="M4.5 10.5H0.5V1.5H12.5V10.5H8.5M6.5 11.5V4.2M4.2 6.6L6.5 4.2L8.8 6.6" fill="none" stroke="#4a4a4a" stroke-width="0.9"/></svg>
<span class="t" style="left:1094.50px;top:11.80px;font-size:14.4px;color:#666;transform:scaleX(0.8478);-webkit-text-stroke:0.45px #666;">CREATED</span>
<span class="t" style="left:1218.30px;top:14.40px;font-size:10.2px;color:#a3a3a3;transform:scaleX(0.8903) rotate(0.03deg);font-weight:bold;">DUE DATE</span>
<span class="t" style="left:1285.00px;top:11.80px;font-size:14.4px;color:#666;transform:scaleX(0.9970);-webkit-text-stroke:0.45px #666;">2024-04-22</span>
<div class="btn"></div>
<svg style="left:1450px;top:13px" width="13" height="14" viewBox="0 0 13 14"><path d="M6.5 0.6Q7.8 5.6 12.4 7Q7.8 8.4 6.5 13.4Q5.2 8.4 0.6 7Q5.2 5.6 6.5 0.6Z" fill="none" stroke="#2c3e63" stroke-width="1" stroke-linejoin="round"/></svg>
<span class="t" style="left:1475.60px;top:12.00px;font-size:14.4px;color:#2f3b58;transform:scaleX(0.8336);-webkit-text-stroke:0.45px #2f3b58;">ISSUE</span>
</div>
<div class="row" style="top:484px">
<span class="t" style="left:34.75px;top:8.40px;font-size:18.2px;color:#333;transform:scaleX(0.7992);font-weight:bold;-webkit-text-stroke:0.3px #333;">B</span>
<div class="bar " style="background:#ff8c00"></div>
<div class="tick"></div>
<span class="t" style="left:112.20px;top:7.65px;font-size:20.3px;color:#404040;transform:scaleX(0.9570);-webkit-text-stroke:0.1px #fff;">A-9202</span>
<span class="t" style="left:181.80px;top:7.65px;font-size:20.3px;color:#404040;transform:scaleX(1.3465);-webkit-text-stroke:0.1px #fff;">/</span>
<span class="t" style="left:196.30px;top:7.65px;font-size:20.3px;color:#404040;transform:scaleX(0.8973);-webkit-text-stroke:0.1px #fff;">PP2024_00275</span>
<span class="t" style="left:347.20px;top:12.30px;font-size:14.2px;color:#444;transform:scaleX(0.7940);">TEST</span>
<span class="t" style="left:586.80px;top:14.40px;font-size:10.2px;color:#939393;transform:scaleX(0.8689) rotate(0.03deg);font-weight:bold;">RESPONSIBILITY</span>
<svg style="left:677px;top:13px" width="21" height="10" viewBox="0 0 21 10"><defs><linearGradient id="ga" x1="0" x2="1"><stop offset="0" stop-color="#2a2f7e" stop-opacity=".2"/><stop offset=".5" stop-color="#e8303a"/><stop offset="1" stop-color="#2a2f7e" stop-opacity=".2"/></linearGradient></defs><rect x="3.5" y="1" width="14" height="1" rx=".5" fill="url(#ga)"/><text x="1.2" y="6.6" font-family="Liberation Sans, sans-serif" font-weight="bold" font-style="italic" font-size="5.6" fill="#2a2f7e" textLength="9" lengthAdjust="spacingAndGlyphs">AUT</text><text x="10.2" y="6.6" font-family="Liberation Sans, sans-serif" font-weight="bold" font-style="italic" font-size="5.6" fill="#e8303a" textLength="10" lengthAdjust="spacingAndGlyphs">ECH</text><rect x="1.2" y="7.2" width="18.6" height="1" rx=".5" fill="#2a2f7e"/><ellipse cx="10.5" cy="8.4" rx="6" ry="1.1" fill="#f4b6ba"/></svg>
<span class="t" style="left:713.30px;top:11.85px;font-size:14.3px;color:#444;transform:scaleX(0.9195);">AUTECH Sicherheitsventile (AUT SV)</span>
<span class="t" style="left:1007.80px;top:14.40px;font-size:10.2px;color:#939393;transform:scaleX(0.8533) rotate(0.03deg);font-weight:bold;">STATUS</span>
<svg style="left:1067px;top:13px" width="13" height="12" viewBox="0 0 13 12"><path d="M4.5 10.5H0.5V1.5H12.5V10.5H8.5M6.5 11.5V4.2M4.2 6.6L6.5 4.2L8.8 6.6" fill="none" stroke="#4a4a4a" stroke-width="0.9"/></svg>
<span class="t" style="left:1094.50px;top:11.80px;font-size:14.4px;color:#666;transform:scaleX(0.8478);-webkit-text-stroke:0.45px #666;">CREATED</span>
<span class="t" style="left:1218.30px;top:14.40px;font-size:10.2px;color:#a3a3a3;transform:scaleX(0.8903) rotate(0.03deg);font-weight:bold;">DUE DATE</span>
<span class="t" style="left:1285.00px;top:11.80px;font-size:14.4px;color:#666;transform:scaleX(0.9970);-webkit-text-stroke:0.45px #666;">2024-04-12</span>
<div class="btn"></div>
<svg style="left:1450px;top:13px" width="13" height="14" viewBox="0 0 13 14"><path d="M6.5 0.6Q7.8 5.6 12.4 7Q7.8 8.4 6.5 13.4Q5.2 8.4 0.6 7Q5.2 5.6 6.5 0.6Z" fill="none" stroke="#2c3e63" stroke-width="1" stroke-linejoin="round"/></svg>
<span class="t" style="left:1475.60px;top:12.00px;font-size:14.4px;color:#2f3b58;transform:scaleX(0.8336);-webkit-text-stroke:0.45px #2f3b58;">ISSUE</span>
</div>
<div class="row" style="top:523px">
<span class="t" style="left:33.65px;top:8.40px;font-size:18.2px;color:#333;transform:scaleX(0.9667);font-weight:bold;-webkit-text-stroke:0.3px #333;">A</span>
<div class="bar " style="background:#fc3b3b"></div>
<div class="tick"></div>
<span class="t" style="left:112.20px;top:7.65px;font-size:20.3px;color:#404040;transform:scaleX(0.9570);-webkit-text-stroke:0.1px #fff;">A-9202</span>
<span class="t" style="left:181.80px;top:7.65px;font-size:20.3px;color:#404040;transform:scaleX(1.3465);-webkit-text-stroke:0.1px #fff;">/</span>
<span class="t" style="left:196.30px;top:7.65px;font-size:20.3px;color:#404040;transform:scaleX(0.8973);-webkit-text-stroke:0.1px #fff;">PP2024_00300</span>
<span class="t" style="left:586.80px;top:14.40px;font-size:10.2px;color:#939393;transform:scaleX(0.8689) rotate(0.03deg);font-weight:bold;">RESPONSIBILITY</span>
<svg style="left:677px;top:9px" width="20" height="20" viewBox="0 0 20 20"><rect width="20" height="20" fill="#08579a"/><path d="M20 9.6C12 9.9 7 14 5 20H20Z" fill="#03295a"/><path d="M20 8.3C11 8.6 5.5 13 2.7 20H4.9C7 14 12 10 20 9.7Z" fill="#fff"/><path d="M11.1 0C7 3.5 4.3 8 4 12.5L4.9 13.1C6 8 10 3 17.4 0Z" fill="#fff"/></svg>
<span class="t" style="left:713.30px;top:11.85px;font-size:14.3px;color:#444;transform:scaleX(0.9271);">Borealis (Borealis)</span>
<span class="t" style="left:1007.80px;top:14.40px;font-size:10.2px;color:#939393;transform:scaleX(0.8533) rotate(0.03deg);font-weight:bold;">STATUS</span>
<svg style="left:1067px;top:13px" width="13" height="12" viewBox="0 0 13 12"><path d="M4.5 10.5H0.5V1.5H12.5V10.5H8.5M6.5 11.5V4.2M4.2 6.6L6.5 4.2L8.8 6.6" fill="none" stroke="#4a4a4a" stroke-width="0.9"/></svg>
<span class="t" style="left:1094.50px;top:11.80px;font-size:14.4px;color:#666;transform:scaleX(0.8478);-webkit-text-stroke:0.45px #666;">CREATED</span>
<span class="t" style="left:1218.30px;top:14.40px;font-size:10.2px;color:#a3a3a3;transform:scaleX(0.8903) rotate(0.03deg);font-weight:bold;">DUE DATE</span>
<div class="btn"></div>
<svg style="left:1450px;top:13px" width="13" height="14" viewBox="0 0 13 14"><path d="M6.5 0.6Q7.8 5.6 12.4 7Q7.8 8.4 6.5 13.4Q5.2 8.4 0.6 7Q5.2 5.6 6.5 0.6Z" fill="none" stroke="#2c3e63" stroke-width="1" stroke-linejoin="round"/></svg>
<span class="t" style="left:1475.60px;top:12.00px;font-size:14.4px;color:#2f3b58;transform:scaleX(0.8336);-webkit-text-stroke:0.45px #2f3b58;">ISSUE</span>
</div>
<div class="row" style="top:562px">
<span class="t" style="left:34.70px;top:8.40px;font-size:18.2px;color:#333;transform:scaleX(0.8069);font-weight:bold;-webkit-text-stroke:0.3px #333;">C</span>
<div class="bar " style="background:#ffe21a"></div>
<div class="tick"></div>
<span class="t" style="left:112.20px;top:7.65px;font-size:20.3px;color:#404040;transform:scaleX(0.9570);-webkit-text-stroke:0.1px #fff;">A-9501</span>
<span class="t" style="left:181.80px;top:7.65px;font-size:20.3px;color:#404040;transform:scaleX(1.3465);-webkit-text-stroke:0.1px #fff;">/</span>
<span class="t" style="left:196.30px;top:7.65px;font-size:20.3px;color:#404040;transform:scaleX(0.8973);-webkit-text-stroke:0.1px #fff;">PP2022_00089</span>
<span class="t" style="left:347.20px;top:12.30px;font-size:14.2px;color:#444;transform:scaleX(0.9465);">Test Markus Traxler - 2022.09.12</span>
<span class="t" style="left:586.80px;top:14.40px;font-size:10.2px;color:#939393;transform:scaleX(0.8689) rotate(0.03deg);font-weight:bold;">RESPONSIBILITY</span>
<svg style="left:677px;top:13px" width="21" height="10" viewBox="0 0 21 10"><defs><linearGradient id="ga" x1="0" x2="1"><stop offset="0" stop-color="#2a2f7e" stop-opacity=".2"/><stop offset=".5" stop-color="#e8303a"/><stop offset="1" stop-color="#2a2f7e" stop-opacity=".2"/></linearGradient></defs><rect x="3.5" y="1" width="14" height="1" rx=".5" fill="url(#ga)"/><text x="1.2" y="6.6" font-family="Liberation Sans, sans-serif" font-weight="bold" font-style="italic" font-size="5.6" fill="#2a2f7e" textLength="9" lengthAdjust="spacingAndGlyphs">AUT</text><text x="10.2" y="6.6" font-family="Liberation Sans, sans-serif" font-weight="bold" font-style="italic" font-size="5.6" fill="#e8303a" textLength="10" lengthAdjust="spacingAndGlyphs">ECH</text><rect x="1.2" y="7.2" width="18.6" height="1" rx=".5" fill="#2a2f7e"/><ellipse cx="10.5" cy="8.4" rx="6" ry="1.1" fill="#f4b6ba"/></svg>
<span class="t" style="left:713.30px;top:11.85px;font-size:14.3px;color:#444;transform:scaleX(0.8721);">AUTECH (AUTECH)</span>
<span class="t" style="left:1007.80px;top:14.40px;font-size:10.2px;color:#939393;transform:scaleX(0.8533) rotate(0.03deg);font-weight:bold;">STATUS</span>
<svg style="left:1067px;top:13px" width="13" height="12" viewBox="0 0 13 12"><path d="M4.5 10.5H0.5V1.5H12.5V10.5H8.5M6.5 11.5V4.2M4.2 6.6L6.5 4.2L8.8 6.6" fill="none" stroke="#4a4a4a" stroke-width="0.9"/></svg>
<span class="t" style="left:1094.50px;top:11.80px;font-size:14.4px;color:#666;transform:scaleX(0.8478);-webkit-text-stroke:0.45px #666;">CREATED</span>
<span class="t" style="left:1218.30px;top:14.40px;font-size:10.2px;color:#a3a3a3;transform:scaleX(0.8903) rotate(0.03deg);font-weight:bold;">DUE DATE</span>
<div class="btn"></div>
<svg style="left:1450px;top:13px" width="13" height="14" viewBox="0 0 13 14"><path d="M6.5 0.6Q7.8 5.6 12.4 7Q7.8 8.4 6.5 13.4Q5.2 8.4 0.6 7Q5.2 5.6 6.5 0.6Z" fill="none" stroke="#2c3e63" stroke-width="1" stroke-linejoin="round"/></svg>
<span class="t" style="left:1475.60px;top:12.00px;font-size:14.4px;color:#2f3b58;transform:scaleX(0.8336);-webkit-text-stroke:0.45px #2f3b58;">ISSUE</span>
</div>
<div class="row" style="top:601px">
<span class="t" style="left:33.65px;top:8.40px;font-size:18.2px;color:#333;transform:scaleX(0.9667);font-weight:bold;-webkit-text-stroke:0.3px #333;">A</span>
<div class="bar " style="background:#fc3b3b"></div>
<div class="tick"></div>
<span class="t" style="left:112.20px;top:7.65px;font-size:20.3px;color:#404040;transform:scaleX(0.9570);-webkit-text-stroke:0.1px #fff;">A-9501</span>
<span class="t" style="left:181.80px;top:7.65px;font-size:20.3px;color:#404040;transform:scaleX(1.3465);-webkit-text-stroke:0.1px #fff;">/</span>
<span class="t" style="left:196.30px;top:7.65px;font-size:20.3px;color:#404040;transform:scaleX(0.8973);-webkit-text-stroke:0.1px #fff;">PP2022_00088</span>
<span class="t" style="left:347.20px;top:12.30px;font-size:14.2px;color:#444;transform:scaleX(0.9277);">Test Markus 2022.09.12 - TEST 1</span>
<span class="t" style="left:586.80px;top:14.40px;font-size:10.2px;color:#939393;transform:scaleX(0.8689) rotate(0.03deg);font-weight:bold;">RESPONSIBILITY</span>
<svg style="left:679px;top:11px" width="16" height="17" viewBox="0 0 16 17"><defs><linearGradient id="g1" x1="0" y1="1" x2="1" y2="0"><stop offset="0" stop-color="#7f8f1a"/><stop offset=".55" stop-color="#c3d21c"/><stop offset="1" stop-color="#d2dc28"/></linearGradient><linearGradient id="g2" x1="0" y1="0" x2="1" y2="0.6"><stop offset="0" stop-color="#1f9fa8"/><stop offset=".45" stop-color="#9ccb3a"/><stop offset="1" stop-color="#d0db1e"/></linearGradient></defs><ellipse cx="9.1" cy="6.4" rx="5.1" ry="5.5" fill="none" stroke="#1b93d6" stroke-width="1.9"/><path d="M0 11.3L6.1 4.4Q8.6 3.1 10.7 5.6L3.3 13.9L0 13.7Z" fill="url(#g1)"/><path d="M5 10Q8 14 13.2 12.2L13.1 15.7Q8 17.4 3.7 11.8Z" fill="url(#g2)"/></svg>
<span class="t" style="left:713.30px;top:11.85px;font-size:14.3px;color:#444;transform:scaleX(0.9733);">Bilfinger (Bilfinger)</span>
<span class="t" style="left:1007.80px;top:14.40px;font-size:10.2px;color:#939393;transform:scaleX(0.8533) rotate(0.03deg);font-weight:bold;">STATUS</span>
<svg style="left:1067px;top:13px" width="13" height="12" viewBox="0 0 13 12"><path d="M4.5 10.5H0.5V1.5H12.5V10.5H8.5M6.5 11.5V4.2M4.2 6.6L6.5 4.2L8.8 6.6" fill="none" stroke="#4a4a4a" stroke-width="0.9"/></svg>
<span class="t" style="left:1094.50px;top:11.80px;font-size:14.4px;color:#666;transform:scaleX(0.8478);-webkit-text-stroke:0.45px #666;">CREATED</span>
<span class="t" style="left:1218.30px;top:14.40px;font-size:10.2px;color:#a3a3a3;transform:scaleX(0.8903) rotate(0.03deg);font-weight:bold;">DUE DATE</span>
<div class="btn"></div>
<svg style="left:1450px;top:13px" width="13" height="14" viewBox="0 0 13 14"><path d="M6.5 0.6Q7.8 5.6 12.4 7Q7.8 8.4 6.5 13.4Q5.2 8.4 0.6 7Q5.2 5.6 6.5 0.6Z" fill="none" stroke="#2c3e63" stroke-width="1" stroke-linejoin="round"/></svg>
<span class="t" style="left:1475.60px;top:12.00px;font-size:14.4px;color:#2f3b58;transform:scaleX(0.8336);-webkit-text-stroke:0.45px #2f3b58;">ISSUE</span>
</div>
<div class="row" style="top:640px">
<span class="t f" style="left:34.70px;top:8.40px;font-size:18.2px;color:#333;transform:scaleX(0.8069);font-weight:bold;-webkit-text-stroke:0.3px #333;">C</span>
<div class="bar f" style="background:#ffe21a"></div>
<div class="tick"></div>
<span class="t f" style="left:112.20px;top:7.65px;font-size:20.3px;color:#404040;transform:scaleX(0.9570);-webkit-text-stroke:0.1px #fff;">A-9501</span>
<span class="t f" style="left:181.80px;top:7.65px;font-size:20.3px;color:#404040;transform:scaleX(1.3465);-webkit-text-stroke:0.1px #fff;">/</span>
<span class="t f" style="left:196.30px;top:7.65px;font-size:20.3px;color:#404040;transform:scaleX(0.8973);-webkit-text-stroke:0.1px #fff;">PP2024_00187</span>
<span class="t f" style="left:347.20px;top:12.30px;font-size:14.2px;color:#444;transform:scaleX(0.9911);">tiest</span>
<span class="t" style="left:586.80px;top:14.40px;font-size:10.2px;color:#939393;transform:scaleX(0.8689) rotate(0.03deg);font-weight:bold;">RESPONSIBILITY</span>
<svg class="f" style="left:679px;top:11px" width="16" height="17" viewBox="0 0 16 17"><defs><linearGradient id="g1" x1="0" y1="1" x2="1" y2="0"><stop offset="0" stop-color="#7f8f1a"/><stop offset=".55" stop-color="#c3d21c"/><stop offset="1" stop-color="#d2dc28"/></linearGradient><linearGradient id="g2" x1="0" y1="0" x2="1" y2="0.6"><stop offset="0" stop-color="#1f9fa8"/><stop offset=".45" stop-color="#9ccb3a"/><stop offset="1" stop-color="#d0db1e"/></linearGradient></defs><ellipse cx="9.1" cy="6.4" rx="5.1" ry="5.5" fill="none" stroke="#1b93d6" stroke-width="1.9"/><path d="M0 11.3L6.1 4.4Q8.6 3.1 10.7 5.6L3.3 13.9L0 13.7Z" fill="url(#g1)"/><path d="M5 10Q8 14 13.2 12.2L13.1 15.7Q8 17.4 3.7 11.8Z" fill="url(#g2)"/></svg>
<span class="t f" style="left:713.30px;top:11.85px;font-size:14.3px;color:#444;transform:scaleX(0.9422);">Bilfinger Isolierung (BIS ISO)</span>
<span class="t" style="left:1007.80px;top:14.40px;font-size:10.2px;color:#939393;transform:scaleX(0.8533) rotate(0.03deg);font-weight:bold;">STATUS</span>
<svg style="left:1066px;top:13px" width="17" height="11" viewBox="0 0 17 11"><path d="M1.2 7.4L3.7 9.7L10.7 2.1M5.1 6.3L8.7 9.7L16.6 1.2" fill="none" stroke="#555" stroke-width="0.9"/></svg>
<span class="t" style="left:1094.50px;top:11.80px;font-size:14.4px;color:#666;transform:scaleX(0.8345);-webkit-text-stroke:0.45px #666;">ACCEPTED</span>
<span class="t" style="left:1218.30px;top:14.40px;font-size:10.2px;color:#a3a3a3;transform:scaleX(0.8903) rotate(0.03deg);font-weight:bold;">DUE DATE</span>
<span class="t" style="left:1410.00px;top:12.30px;font-size:14.2px;color:#444;transform:scaleX(0.9600);">This Punchpoint</span>
</div>
<div class="row" style="top:679px">
<span class="t" style="left:34.70px;top:8.40px;font-size:18.2px;color:#333;transform:scaleX(0.8069);font-weight:bold;-webkit-text-stroke:0.3px #333;">C</span>
<div class="bar " style="background:#ffe21a"></div>
<div class="tick"></div>
<span class="t" style="left:112.20px;top:7.65px;font-size:20.3px;color:#404040;transform:scaleX(0.9570);-webkit-text-stroke:0.1px #fff;">A-9501</span>
<span class="t" style="left:181.80px;top:7.65px;font-size:20.3px;color:#404040;transform:scaleX(1.3465);-webkit-text-stroke:0.1px #fff;">/</span>
<span class="t" style="left:196.30px;top:7.65px;font-size:20.3px;color:#404040;transform:scaleX(0.8973);-webkit-text-stroke:0.1px #fff;">PP2024_00310</span>
<span class="t" style="left:347.20px;top:12.30px;font-size:14.2px;color:#444;transform:scaleX(0.8564);">TEST ARU</span>
<span class="t" style="left:586.80px;top:14.40px;font-size:10.2px;color:#939393;transform:scaleX(0.8689) rotate(0.03deg);font-weight:bold;">RESPONSIBILITY</span>
<svg style="left:679px;top:11px" width="16" height="17" viewBox="0 0 16 17"><defs><linearGradient id="g1" x1="0" y1="1" x2="1" y2="0"><stop offset="0" stop-color="#7f8f1a"/><stop offset=".55" stop-color="#c3d21c"/><stop offset="1" stop-color="#d2dc28"/></linearGradient><linearGradient id="g2" x1="0" y1="0" x2="1" y2="0.6"><stop offset="0" stop-color="#1f9fa8"/><stop offset=".45" stop-color="#9ccb3a"/><stop offset="1" stop-color="#d0db1e"/></linearGradient></defs><ellipse cx="9.1" cy="6.4" rx="5.1" ry="5.5" fill="none" stroke="#1b93d6" stroke-width="1.9"/><path d="M0 11.3L6.1 4.4Q8.6 3.1 10.7 5.6L3.3 13.9L0 13.7Z" fill="url(#g1)"/><path d="M5 10Q8 14 13.2 12.2L13.1 15.7Q8 17.4 3.7 11.8Z" fill="url(#g2)"/></svg>
<span class="t" style="left:713.30px;top:11.85px;font-size:14.3px;color:#444;transform:scaleX(0.9369);">Bilfinger Messtechnik (BIS MSR)</span>
<span class="t" style="left:1007.80px;top:14.40px;font-size:10.2px;color:#939393;transform:scaleX(0.8533) rotate(0.03deg);font-weight:bold;">STATUS</span>
<svg style="left:1067px;top:13px" width="13" height="12" viewBox="0 0 13 12"><path d="M4.5 10.5H0.5V1.5H12.5V10.5H8.5M6.5 11.5V4.2M4.2 6.6L6.5 4.2L8.8 6.6" fill="none" stroke="#4a4a4a" stroke-width="0.9"/></svg>
<span class="t" style="left:1094.50px;top:11.80px;font-size:14.4px;color:#666;transform:scaleX(0.8478);-webkit-text-stroke:0.45px #666;">CREATED</span>
<span class="t" style="left:1218.30px;top:14.40px;font-size:10.2px;color:#a3a3a3;transform:scaleX(0.8903) rotate(0.03deg);font-weight:bold;">DUE DATE</span>
<span class="t" style="left:1285.00px;top:11.80px;font-size:14.4px;color:#666;transform:scaleX(0.9970);-webkit-text-stroke:0.45px #666;">2024-04-22</span>
<div class="btn"></div>
<svg style="left:1450px;top:13px" width="13" height="14" viewBox="0 0 13 14"><path d="M6.5 0.6Q7.8 5.6 12.4 7Q7.8 8.4 6.5 13.4Q5.2 8.4 0.6 7Q5.2 5.6 6.5 0.6Z" fill="none" stroke="#2c3e63" stroke-width="1" stroke-linejoin="round"/></svg>
<span class="t" style="left:1475.60px;top:12.00px;font-size:14.4px;color:#2f3b58;transform:scaleX(0.8336);-webkit-text-stroke:0.45px #2f3b58;">ISSUE</span>
</div>
<div class="row" style="top:718px">
<span class="t" style="left:34.75px;top:8.40px;font-size:18.2px;color:#333;transform:scaleX(0.7992);font-weight:bold;-webkit-text-stroke:0.3px #333;">B</span>
<div class="bar " style="background:#ff8c00"></div>
<div class="tick"></div>
<span class="t" style="left:112.20px;top:7.65px;font-size:20.3px;color:#404040;transform:scaleX(0.9570);-webkit-text-stroke:0.1px #fff;">A-9501</span>
<span class="t" style="left:181.80px;top:7.65px;font-size:20.3px;color:#404040;transform:scaleX(1.3465);-webkit-text-stroke:0.1px #fff;">/</span>
<span class="t" style="left:196.30px;top:7.65px;font-size:20.3px;color:#404040;transform:scaleX(0.8973);-webkit-text-stroke:0.1px #fff;">PP2024_00309</span>
<span class="t" style="left:347.20px;top:12.30px;font-size:14.2px;color:#444;transform:scaleX(0.8564);">TEST ARU</span>
<span class="t" style="left:586.80px;top:14.40px;font-size:10.2px;color:#939393;transform:scaleX(0.8689) rotate(0.03deg);font-weight:bold;">RESPONSIBILITY</span>
<svg style="left:679px;top:11px" width="16" height="17" viewBox="0 0 16 17"><defs><linearGradient id="g1" x1="0" y1="1" x2="1" y2="0"><stop offset="0" stop-color="#7f8f1a"/><stop offset=".55" stop-color="#c3d21c"/><stop offset="1" stop-color="#d2dc28"/></linearGradient><linearGradient id="g2" x1="0" y1="0" x2="1" y2="0.6"><stop offset="0" stop-color="#1f9fa8"/><stop offset=".45" stop-color="#9ccb3a"/><stop offset="1" stop-color="#d0db1e"/></linearGradient></defs><ellipse cx="9.1" cy="6.4" rx="5.1" ry="5.5" fill="none" stroke="#1b93d6" stroke-width="1.9"/><path d="M0 11.3L6.1 4.4Q8.6 3.1 10.7 5.6L3.3 13.9L0 13.7Z" fill="url(#g1)"/><path d="M5 10Q8 14 13.2 12.2L13.1 15.7Q8 17.4 3.7 11.8Z" fill="url(#g2)"/></svg>
<span class="t" style="left:713.30px;top:11.85px;font-size:14.3px;color:#444;transform:scaleX(0.9447);">Bilfinger Begleitheizung (BIS BGH)</span>
<span class="t" style="left:1007.80px;top:14.40px;font-size:10.2px;color:#939393;transform:scaleX(0.8533) rotate(0.03deg);font-weight:bold;">STATUS</span>
<svg style="left:1067px;top:13px" width="13" height="12" viewBox="0 0 13 12"><path d="M4.5 10.5H0.5V1.5H12.5V10.5H8.5M6.5 11.5V4.2M4.2 6.6L6.5 4.2L8.8 6.6" fill="none" stroke="#4a4a4a" stroke-width="0.9"/></svg>
<span class="t" style="left:1094.50px;top:11.80px;font-size:14.4px;color:#666;transform:scaleX(0.8478);-webkit-text-stroke:0.45px #666;">CREATED</span>
<span class="t" style="left:1218.30px;top:14.40px;font-size:10.2px;color:#a3a3a3;transform:scaleX(0.8903) rotate(0.03deg);font-weight:bold;">DUE DATE</span>
<span class="t" style="left:1285.00px;top:11.80px;font-size:14.4px;color:#666;transform:scaleX(0.9970);-webkit-text-stroke:0.45px #666;">2024-04-22</span>
<div class="btn"></div>
<svg style="left:1450px;top:13px" width="13" height="14" viewBox="0 0 13 14"><path d="M6.5 0.6Q7.8 5.6 12.4 7Q7.8 8.4 6.5 13.4Q5.2 8.4 0.6 7Q5.2 5.6 6.5 0.6Z" fill="none" stroke="#2c3e63" stroke-width="1" stroke-linejoin="round"/></svg>
<span class="t" style="left:1475.60px;top:12.00px;font-size:14.4px;color:#2f3b58;transform:scaleX(0.8336);-webkit-text-stroke:0.45px #2f3b58;">ISSUE</span>
</div>
<div class="row" style="top:757px">
<span class="t" style="left:33.95px;top:8.40px;font-size:18.2px;color:#333;transform:scaleX(0.9210);font-weight:bold;-webkit-text-stroke:0.3px #333;">D</span>
<div class="bar " style="background:#2abfa6"></div>
<div class="tick"></div>
<span class="t" style="left:112.20px;top:7.65px;font-size:20.3px;color:#404040;transform:scaleX(0.9570);-webkit-text-stroke:0.1px #fff;">A-9501</span>
<span class="t" style="left:181.80px;top:7.65px;font-size:20.3px;color:#404040;transform:scaleX(1.3465);-webkit-text-stroke:0.1px #fff;">/</span>
<span class="t" style="left:196.30px;top:7.65px;font-size:20.3px;color:#404040;transform:scaleX(0.9072);-webkit-text-stroke:0.1px #fff;">PP2024_00311</span>
<span class="t" style="left:347.20px;top:12.30px;font-size:14.2px;color:#444;transform:scaleX(0.8564);">TEST ARU</span>
<span class="t" style="left:586.80px;top:14.40px;font-size:10.2px;color:#939393;transform:scaleX(0.8689) rotate(0.03deg);font-weight:bold;">RESPONSIBILITY</span>
<svg style="left:679px;top:11px" width="16" height="17" viewBox="0 0 16 17"><defs><linearGradient id="g1" x1="0" y1="1" x2="1" y2="0"><stop offset="0" stop-color="#7f8f1a"/><stop offset=".55" stop-color="#c3d21c"/><stop offset="1" stop-color="#d2dc28"/></linearGradient><linearGradient id="g2" x1="0" y1="0" x2="1" y2="0.6"><stop offset="0" stop-color="#1f9fa8"/><stop offset=".45" stop-color="#9ccb3a"/><stop offset="1" stop-color="#d0db1e"/></linearGradient></defs><ellipse cx="9.1" cy="6.4" rx="5.1" ry="5.5" fill="none" stroke="#1b93d6" stroke-width="1.9"/><path d="M0 11.3L6.1 4.4Q8.6 3.1 10.7 5.6L3.3 13.9L0 13.7Z" fill="url(#g1)"/><path d="M5 10Q8 14 13.2 12.2L13.1 15.7Q8 17.4 3.7 11.8Z" fill="url(#g2)"/></svg>
<span class="t" style="left:713.30px;top:11.85px;font-size:14.3px;color:#444;transform:scaleX(0.9088);">Bilfinger Elektrik (BIS ELEK)</span>
<span class="t" style="left:1007.80px;top:14.40px;font-size:10.2px;color:#939393;transform:scaleX(0.8533) rotate(0.03deg);font-weight:bold;">STATUS</span>
<svg style="left:1067px;top:13px" width="13" height="12" viewBox="0 0 13 12"><path d="M4.5 10.5H0.5V1.5H12.5V10.5H8.5M6.5 11.5V4.2M4.2 6.6L6.5 4.2L8.8 6.6" fill="none" stroke="#4a4a4a" stroke-width="0.9"/></svg>
<span class="t" style="left:1094.50px;top:11.80px;font-size:14.4px;color:#666;transform:scaleX(0.8478);-webkit-text-stroke:0.45px #666;">CREATED</span>
<span class="t" style="left:1218.30px;top:14.40px;font-size:10.2px;color:#a3a3a3;transform:scaleX(0.8903) rotate(0.03deg);font-weight:bold;">DUE DATE</span>
<span class="t" style="left:1285.00px;top:11.80px;font-size:14.4px;color:#666;transform:scaleX(0.9970);-webkit-text-stroke:0.45px #666;">2024-04-22</span>
<div class="btn"></div>
<svg style="left:1450px;top:13px" width="13" height="14" viewBox="0 0 13 14"><path d="M6.5 0.6Q7.8 5.6 12.4 7Q7.8 8.4 6.5 13.4Q5.2 8.4 0.6 7Q5.2 5.6 6.5 0.6Z" fill="none" stroke="#2c3e63" stroke-width="1" stroke-linejoin="round"/></svg>
<span class="t" style="left:1475.60px;top:12.00px;font-size:14.4px;color:#2f3b58;transform:scaleX(0.8336);-webkit-text-stroke:0.45px #2f3b58;">ISSUE</span>
</div>
</div>
<div id="ov" class="abs"></div>
<svg style="left:1420px;top:494px" width="30" height="34" viewBox="0 0 30 34"><path d="M7.5 4L21.5 17L7.5 30" fill="none" stroke="#444b55" stroke-width="4.6"/></svg>
<div class="abs" style="left:1851px;top:248px;width:1px;height:53px;background:#7f7f7f"></div>
<div id="panel" class="abs">
<div class="abs" style="left:281px;top:-6px;width:8px;height:8px;border:1px solid #000"></div>
<svg style="left:327px;top:-8px" width="10" height="10" viewBox="0 0 10 10"><path d="M0 0L10 10M10 0L0 10" stroke="#000" stroke-width="1.1" fill="none"/></svg>
<div class="abs" style="left:189px;top:37px;width:40px;height:40px;border-radius:50%;border:2px solid #000"></div>
<div class="abs" style="left:286px;top:37px;width:40px;height:40px;border-radius:50%;border:2px solid #000"></div>
<svg style="left:198px;top:47px" width="22" height="20" viewBox="0 0 22 20"><path d="M1.3 13.2L13.4 1.4L20.5 8.4L11.4 17.6H5.7ZM5.3 9.4L12.4 16.5M5.7 17.6H15.9" fill="none" stroke="#000" stroke-width="1.2" stroke-linejoin="round"/></svg>
<svg style="left:295px;top:47px" width="22" height="20" viewBox="0 0 22 20"><path d="M1 1.5H21L13 10.6V18.3H9V10.6ZM2 2.4H20" fill="none" stroke="#000" stroke-width="1.2" stroke-linejoin="round"/></svg>
<span class="t" style="left:192.60px;top:84.90px;font-size:10.6px;color:#111;transform:scaleX(0.8439) rotate(0.03deg);">Clear all</span>
<span class="t" style="left:294.00px;top:84.90px;font-size:10.6px;color:#111;transform:scaleX(0.9056) rotate(0.03deg);">Apply</span>
<span class="t" style="left:9.90px;top:110.60px;font-size:16.0px;color:#444;transform:scaleX(0.9446);">Plants</span>
<div class="fld" style="top:129px"></div>
<svg style="left:24px;top:142.6px" width="8" height="13" viewBox="0 0 8 13"><path d="M0.9 0.6L7 6.5L0.9 12.4" fill="none" stroke="#222" stroke-width="1.15"/></svg>
<svg style="left:322.5px;top:144.5px" width="11" height="11" viewBox="0 0 11 11"><path d="M0.5 0.5L10.5 10.5M10.5 0.5L0.5 10.5" fill="none" stroke="#000" stroke-width="1.1"/></svg>
<span class="t" style="left:9.90px;top:170.60px;font-size:16.0px;color:#444;transform:scaleX(0.9227);">Systems</span>
<div class="fld" style="top:189px"></div>
<svg style="left:24px;top:202.6px" width="8" height="13" viewBox="0 0 8 13"><path d="M0.9 0.6L7 6.5L0.9 12.4" fill="none" stroke="#222" stroke-width="1.15"/></svg>
<svg style="left:322.5px;top:204.5px" width="11" height="11" viewBox="0 0 11 11"><path d="M0.5 0.5L10.5 10.5M10.5 0.5L0.5 10.5" fill="none" stroke="#000" stroke-width="1.1"/></svg>
<span class="t" style="left:9.90px;top:230.60px;font-size:16.0px;color:#444;transform:scaleX(0.9523);">Sub-Systems</span>
<div class="fld" style="top:249px"></div>
<svg style="left:24px;top:262.6px" width="8" height="13" viewBox="0 0 8 13"><path d="M0.9 0.6L7 6.5L0.9 12.4" fill="none" stroke="#222" stroke-width="1.15"/></svg>
<svg style="left:322.5px;top:264.5px" width="11" height="11" viewBox="0 0 11 11"><path d="M0.5 0.5L10.5 10.5M10.5 0.5L0.5 10.5" fill="none" stroke="#000" stroke-width="1.1"/></svg>
<span class="t" style="left:9.90px;top:290.60px;font-size:16.0px;color:#444;transform:scaleX(0.9581);">Zones</span>
<div class="fld" style="top:309px"></div>
<svg style="left:24px;top:322.6px" width="8" height="13" viewBox="0 0 8 13"><path d="M0.9 0.6L7 6.5L0.9 12.4" fill="none" stroke="#222" stroke-width="1.15"/></svg>
<svg style="left:322.5px;top:324.5px" width="11" height="11" viewBox="0 0 11 11"><path d="M0.5 0.5L10.5 10.5M10.5 0.5L0.5 10.5" fill="none" stroke="#000" stroke-width="1.1"/></svg>
<span class="t" style="left:9.90px;top:350.60px;font-size:16.0px;color:#444;transform:scaleX(0.9887);">Responsibility</span>
<div class="fld" style="top:369px"></div>
<svg style="left:24px;top:382.6px" width="8" height="13" viewBox="0 0 8 13"><path d="M0.9 0.6L7 6.5L0.9 12.4" fill="none" stroke="#222" stroke-width="1.15"/></svg>
<svg style="left:322.5px;top:384.5px" width="11" height="11" viewBox="0 0 11 11"><path d="M0.5 0.5L10.5 10.5M10.5 0.5L0.5 10.5" fill="none" stroke="#000" stroke-width="1.1"/></svg>
<span class="t" style="left:9.90px;top:410.60px;font-size:16.0px;color:#444;transform:scaleX(0.9936);">Tag Number</span>
<div class="inp" style="top:429px"></div>
<svg style="left:322.5px;top:443.5px" width="11" height="11" viewBox="0 0 11 11"><path d="M0.5 0.5L10.5 10.5M10.5 0.5L0.5 10.5" fill="none" stroke="#000" stroke-width="1.1"/></svg>
<span class="t" style="left:9.90px;top:468.60px;font-size:16.0px;color:#444;transform:scaleX(1.0097);">WO/PO Number</span>
<div class="inp" style="top:487px"></div>
<svg style="left:322.5px;top:501.5px" width="11" height="11" viewBox="0 0 11 11"><path d="M0.5 0.5L10.5 10.5M10.5 0.5L0.5 10.5" fill="none" stroke="#000" stroke-width="1.1"/></svg>
<span class="t" style="left:9.90px;top:526.60px;font-size:16.0px;color:#444;transform:scaleX(0.9825);">Punchpoint Status</span>
<div class="fld" style="top:545px"></div>
<svg style="left:24px;top:558.6px" width="8" height="13" viewBox="0 0 8 13"><path d="M0.9 0.6L7 6.5L0.9 12.4" fill="none" stroke="#222" stroke-width="1.15"/></svg>
<svg style="left:322.5px;top:560.5px" width="11" height="11" viewBox="0 0 11 11"><path d="M0.5 0.5L10.5 10.5M10.5 0.5L0.5 10.5" fill="none" stroke="#000" stroke-width="1.1"/></svg>
<span class="t" style="left:9.90px;top:586.60px;font-size:16.0px;color:#444;transform:scaleX(1.0166);">Priority</span>
<div class="fld" style="top:605px"></div>
<svg style="left:24px;top:618.6px" width="8" height="13" viewBox="0 0 8 13"><path d="M0.9 0.6L7 6.5L0.9 12.4" fill="none" stroke="#222" stroke-width="1.15"/></svg>
<svg style="left:322.5px;top:620.5px" width="11" height="11" viewBox="0 0 11 11"><path d="M0.5 0.5L10.5 10.5M10.5 0.5L0.5 10.5" fill="none" stroke="#000" stroke-width="1.1"/></svg>
<span class="t" style="left:9.90px;top:646.60px;font-size:16.0px;color:#444;transform:scaleX(1.0155);">Punchpoint Number</span>
<div class="inp" style="top:665px"></div>
<svg style="left:322.5px;top:679.5px" width="11" height="11" viewBox="0 0 11 11"><path d="M0.5 0.5L10.5 10.5M10.5 0.5L0.5 10.5" fill="none" stroke="#000" stroke-width="1.1"/></svg>
<span class="t" style="left:9.90px;top:704.60px;font-size:16.0px;color:#444;transform:scaleX(1.0064);">Punchpoint Description</span>
<div class="inp" style="top:723px"></div>
<svg style="left:322.5px;top:737.5px" width="11" height="11" viewBox="0 0 11 11"><path d="M0.5 0.5L10.5 10.5M10.5 0.5L0.5 10.5" fill="none" stroke="#000" stroke-width="1.1"/></svg>
<span class="t" style="left:9.90px;top:762.60px;font-size:16.0px;color:#444;transform:scaleX(0.9547);">Issuer</span>
<div class="inp" style="top:781px"></div>
<svg style="left:322.5px;top:795.5px" width="11" height="11" viewBox="0 0 11 11"><path d="M0.5 0.5L10.5 10.5M10.5 0.5L0.5 10.5" fill="none" stroke="#000" stroke-width="1.1"/></svg>
</div>
</div></body></html>
